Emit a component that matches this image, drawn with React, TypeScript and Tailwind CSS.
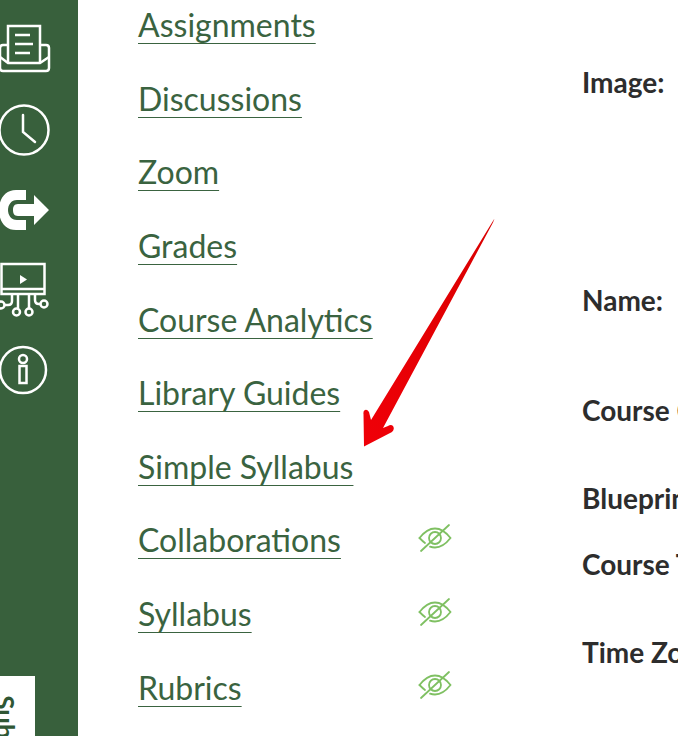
const links = [
  { t: "Assignments" },
  { t: "Discussions" },
  { t: "Zoom" },
  { t: "Grades" },
  { t: "Course Analytics" },
  { t: "Library Guides" },
  { t: "Simple Syllabus" },
  { t: "Collaborations", hidden: true },
  { t: "Syllabus", hidden: true },
  { t: "Rubrics", hidden: true },
];

const labels = [
  { t: "Image:", h: "h-[218px]" },
  { t: "Name:", h: "h-[110px]" },
  { t: "Course Code:", h: "h-[88px]" },
  { t: "Blueprint Course:", h: "h-[66px]" },
  { t: "Course Template:", h: "h-[88px]" },
  { t: "Time Zone:", h: "h-[60px]" },
];

function EyeOff() {
  return (
    <svg width="34" height="32" viewBox="0 0 34 32" fill="none" stroke="#7fc062" strokeWidth="1.800" strokeLinecap="round">
      <path d="M1.500 16 C7 9 12 6.500 17 6.500 C22 6.500 27 9 32.500 16 C27 23 22 25.500 17 25.500 C15 25.500 13.500 25.200 12 24.700" />
      <path d="M1.500 16 C3.500 18 5 19.500 7 21" />
      <circle cx="17" cy="16" r="6" />
      <path d="M3 29 L31 3" />
    </svg>
  );
}

function Icons() {
  return (
    <div className="flex flex-col items-center pt-[24px] text-white">
      <svg width="52" height="52" viewBox="0 0 52 52" fill="none" stroke="white" strokeWidth="2.500">
        <path d="M9 39 V2 H41 V39" />
        <path d="M16 11 H31 M16 20 H34 M16 29 H31" />
        <path d="M9 21 H4 Q1 21 1 24 V44 Q1 47 4 47 H47 Q50 47 50 44 V24 Q50 21 47 21 H41" />
        <path d="M1 33 L9 39 H41 L50 33" />
      </svg>
      <svg className="mt-[28px]" width="52" height="52" viewBox="0 0 52 52" fill="none" stroke="white" strokeWidth="2.500" strokeLinecap="round">
        <circle cx="25" cy="26" r="24.500" />
        <path d="M24 11 V28 L36 38" />
      </svg>
      <svg className="mt-[33px]" width="52" height="42" viewBox="0 0 52 42" fill="white">
        <path d="M50 21 L35 6 V15 H19 C15 15 14 18 14 21 C14 24 15 27 19 27 H35 V36 L50 21 Z" />
        <path d="M27 1 H17 C6 1 0 10 0 21 C0 32 6 41 17 41 H27 V31 H18 C12 31 9 26 9 21 C9 16 12 11 18 11 H27 Z" />
      </svg>
      <svg className="mt-[31px]" width="52" height="58" viewBox="0 0 52 58" fill="none" stroke="white" strokeWidth="2.500">
        <rect x="2.500" y="2" width="43" height="30" />
        <path d="M2.500 27 H45.500" />
        <path d="M21 13 L28 17.500 L21 22 Z" fill="white" stroke="none" />
        <path d="M13 32 V39 Q13 43 9 43 H5" />
        <path d="M19 32 V46" />
        <path d="M30 32 V46" />
        <path d="M36 32 V38 Q36 42 40 42 H42" />
        <circle cx="2" cy="43" r="3.500" />
        <circle cx="17.500" cy="50" r="3.500" />
        <circle cx="30" cy="50" r="3.500" />
        <circle cx="45" cy="42" r="3.500" />
      </svg>
      <svg className="mt-[24px]" width="52" height="52" viewBox="0 0 52 52" fill="none" stroke="white" strokeWidth="2.500">
        <circle cx="24" cy="26" r="23" />
        <circle cx="24" cy="15" r="4" />
        <rect x="20.500" y="22" width="7" height="17" />
      </svg>
    </div>
  );
}

export default function App() {
  return (
    <div className="relative flex h-[736px] w-[678px] overflow-hidden bg-white font-['Lato','Open_Sans',sans-serif]">
      <aside className="relative w-[78px] shrink-0 bg-[#38603c]">
        <div className="w-[50px]">
          <Icons />
        </div>
        <div className="absolute bottom-0 left-0 h-[60px] w-[35px] overflow-hidden bg-white">
          <span className="absolute left-[-17px] top-[28px] block origin-center rotate-90 whitespace-nowrap text-[26px] font-bold leading-none text-[#2f5735]">
            Sub
          </span>
        </div>
      </aside>

      <nav className="ml-[60px] flex w-[314px] shrink-0 flex-col">
        <div className="-mt-[12px] flex flex-col">
          {links.map((l) => (
            <div key={l.t} className="flex h-[73.6px] shrink-0 items-center justify-between">
              <a className="text-[32px] leading-[35px] text-[#3a6340] underline decoration-1 underline-offset-[6px]">{l.t}</a>
              {l.hidden && (
                <span className="-mt-[4px]">
                  <EyeOff />
                </span>
              )}
            </div>
          ))}
        </div>
      </nav>

      <div className="ml-[130px] flex shrink-0 flex-col whitespace-nowrap pt-[65px] text-[28px] font-bold leading-[34px] text-[#2d2d2d]">
        {labels.map((l) => (
          <div key={l.t} className={`${l.h} shrink-0`}>
            {l.t}
          </div>
        ))}
      </div>

      <svg className="absolute left-[360px] top-[216px]" width="138" height="232" viewBox="0 0 138 232">
        <defs>
          <linearGradient id="red" x1="0" y1="1" x2="1" y2="0">
            <stop offset="0" stopColor="#f00008" />
            <stop offset="1" stopColor="#d90000" />
          </linearGradient>
        </defs>
        <path
          d="M134.500 2.500 L133 6.500 L23 212 L28 210 Q31 208 33 210 Q35 213 32 216 L4 230.500 L3.500 198 Q3 195 5 194 Q7 193 9 196 L11 204 Z"
          fill="url(#red)"
        />
      </svg>
    </div>
  );
}
